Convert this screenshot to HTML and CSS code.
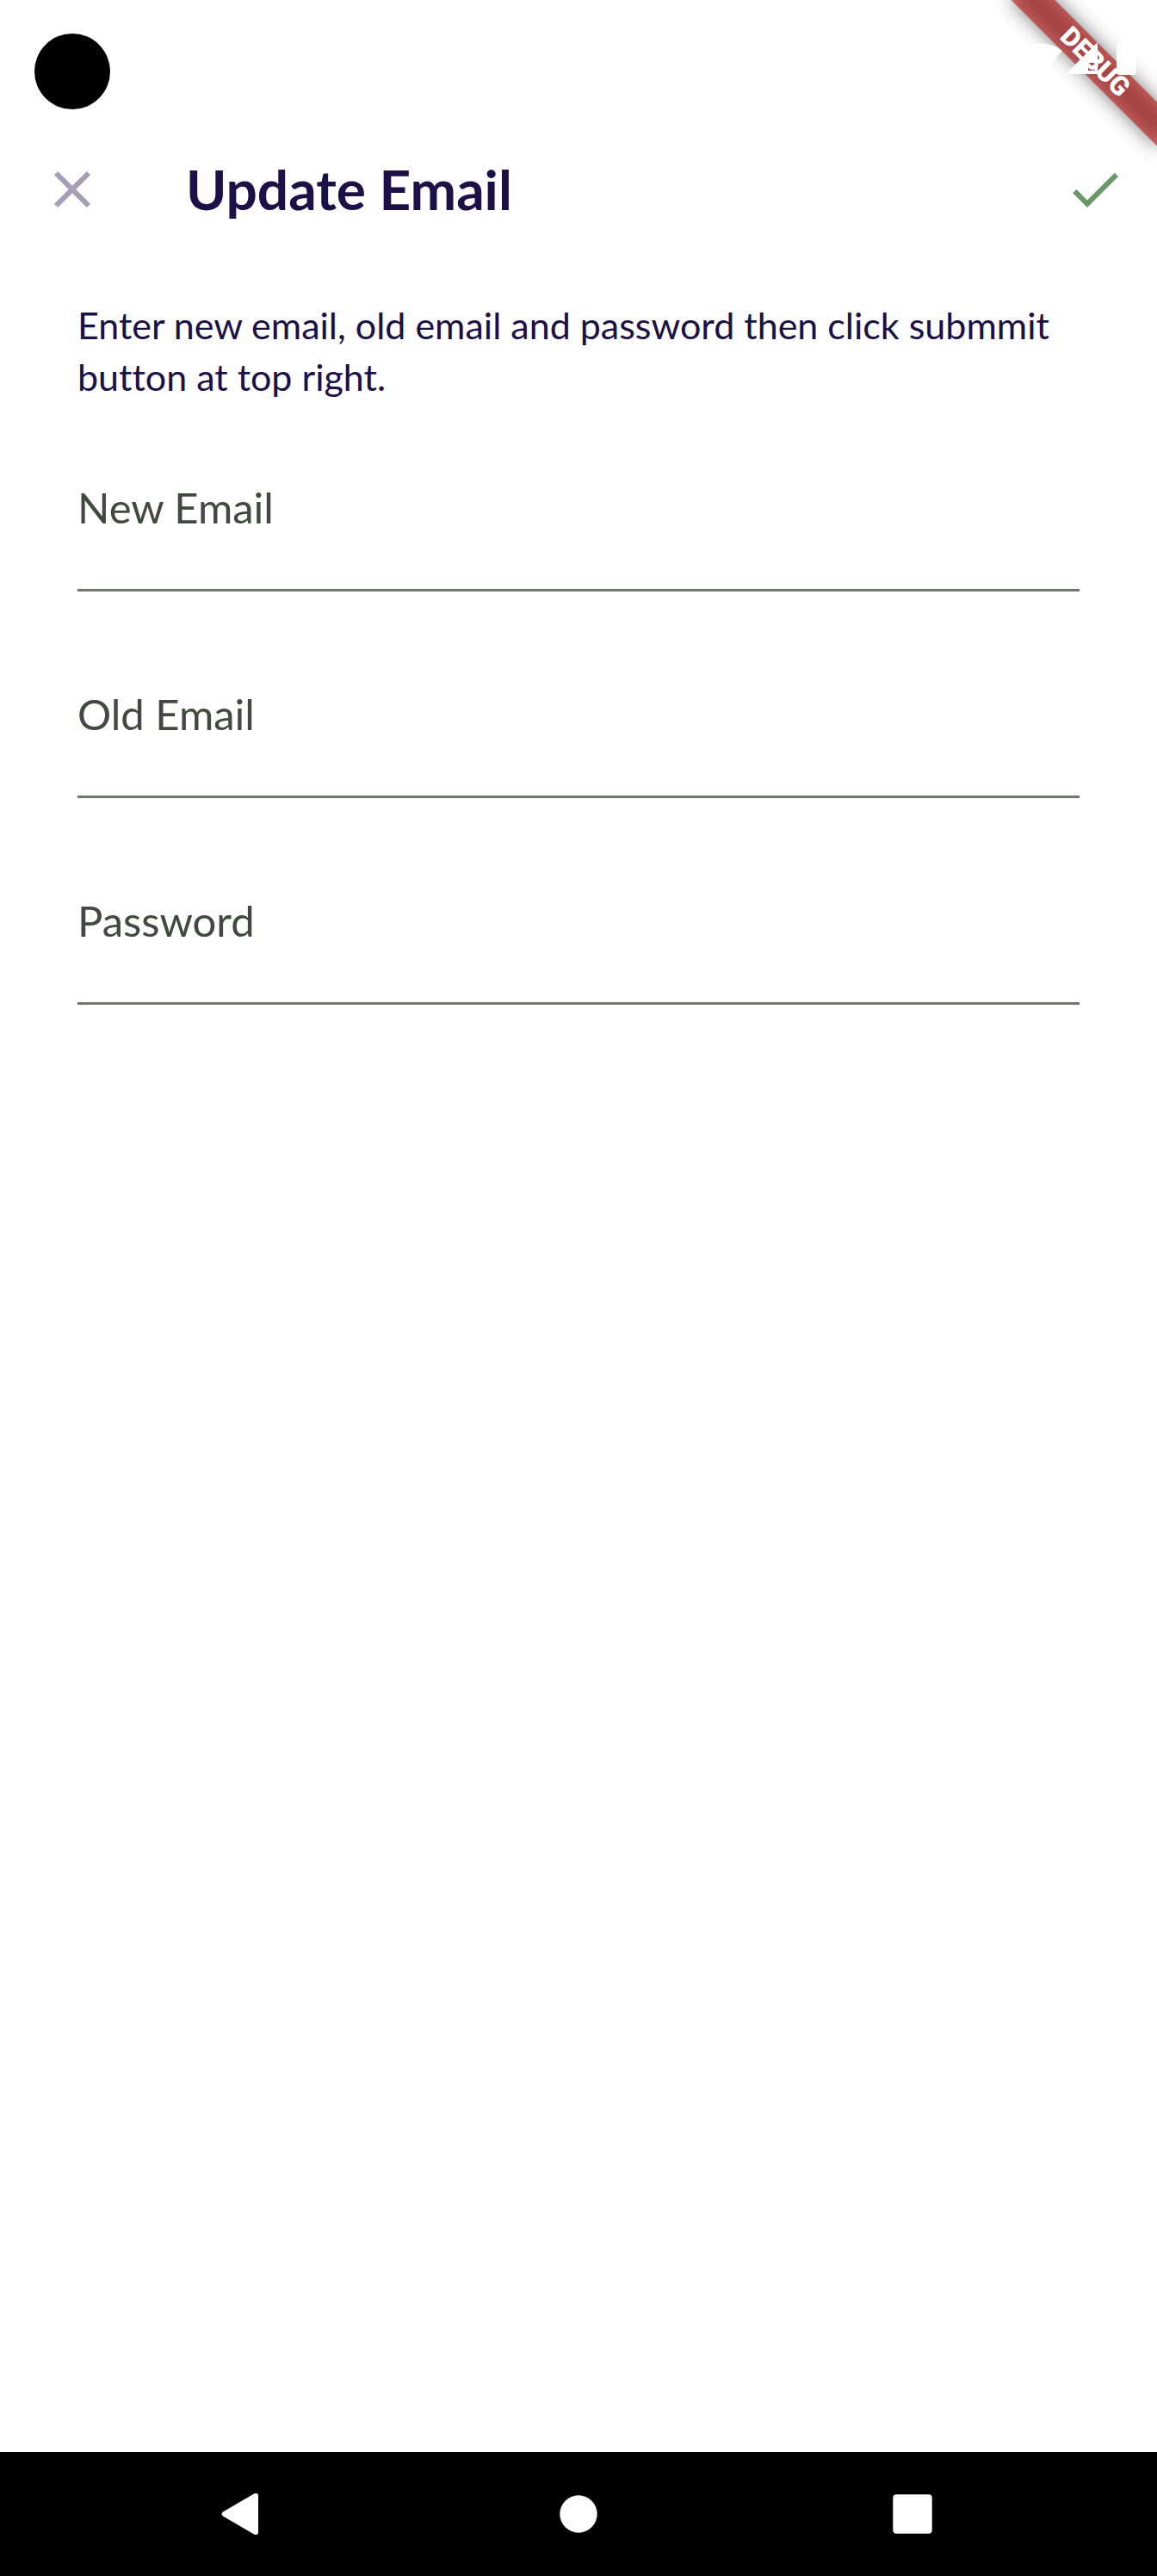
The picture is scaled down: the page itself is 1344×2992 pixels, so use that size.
FILE: index.html
```html
<!DOCTYPE html>
<html lang="en">
<head>
  <meta charset="utf-8">
  <meta name="viewport" content="width=device-width, initial-scale=1">
  <title>Update Email</title>
  <link rel="stylesheet" href="styles.css">
</head>
<body>
  <div class="screen">
    <div class="status-bar">
      <span class="camera"></span>
      <svg class="status-icons" width="136" height="40" viewBox="0 0 136 40" aria-hidden="true">
        <path d="M2 12A38 38 0 0 1 50 12L26 39Z"/>
        <path fill-rule="evenodd" d="M54 39L91 2V39ZM80 26V35H88V26Z"/>
        <path d="M120 0h9v5h4a3 3 0 0 1 3 3v29a3 3 0 0 1-3 3h-17a3 3 0 0 1-3-3V8a3 3 0 0 1 3-3h4z"/>
      </svg>
    </div>

    <form class="form">
      <header class="app-bar">
        <button class="icon-button close" type="button" aria-label="Close">
          <svg class="icon" viewBox="0 0 24 24" aria-hidden="true"><path d="M19 6.41L17.59 5 12 10.59 6.41 5 5 6.41 10.59 12 5 17.59 6.41 19 12 13.41 17.59 19 19 17.59 13.41 12z"/></svg>
        </button>
        <h1 class="title">Update Email</h1>
        <button class="icon-button submit" type="submit" aria-label="Submit">
          <svg class="icon" viewBox="0 0 24 24" aria-hidden="true"><path d="M9 16.17L4.83 12l-1.42 1.41L9 19 21 7l-1.41-1.41z"/></svg>
        </button>
      </header>

      <main class="content">
        <p class="intro">Enter new email, old email and password then click submmit button at top right.</p>
        <div class="fields">
          <div class="field">
            <label class="field-label" for="new-email">New Email</label>
            <input class="field-input" id="new-email" type="email">
          </div>
          <div class="field">
            <label class="field-label" for="old-email">Old Email</label>
            <input class="field-input" id="old-email" type="email">
          </div>
          <div class="field">
            <label class="field-label" for="password">Password</label>
            <input class="field-input" id="password" type="password">
          </div>
        </div>
      </main>
    </form>

    <nav class="nav-bar" aria-label="System">
      <button class="nav-button" type="button" aria-label="Back">
        <svg width="60" height="48" viewBox="-1 0 60 48" aria-hidden="true"><path d="M4 21.500L40 .5Q45 -1.500 45 3V45Q45 49.500 40 47.500L4 26.500Q1 24 4 21.500Z"/></svg>
      </button>
      <button class="nav-button" type="button" aria-label="Home">
        <svg width="48" height="48" viewBox="0 0 48 48" aria-hidden="true"><circle cx="24" cy="24" r="21.700"/></svg>
      </button>
      <button class="nav-button" type="button" aria-label="Recent apps">
        <svg width="48" height="48" viewBox="0 0 48 48" aria-hidden="true"><rect x="1.300" y="1.300" width="45.400" height="45.400" rx="4"/></svg>
      </button>
    </nav>

    <div class="debug-corner"><span class="debug-ribbon">DEBUG</span></div>
  </div>
</body>
</html>
```
FILE: styles.css
```css
*,
*::before,
*::after {
  box-sizing: border-box;
}

body {
  margin: 0;
  background: #fefefe;
  color: #1c1147;
  font-family: Lato, "Noto Sans", sans-serif;
  font-variant-ligatures: none;
}

button {
  padding: 0;
  border: 0;
  background: none;
}

svg {
  display: block;
  fill: currentColor;
}

.screen {
  position: relative;
  display: flex;
  flex-direction: column;
  min-height: 100vh;
}

/* Status bar */
.status-bar {
  display: flex;
  align-items: flex-start;
  justify-content: space-between;
  height: 136px;
  padding: 39px 24px 0 40px;
}

.camera {
  width: 88px;
  height: 88px;
  border-radius: 50%;
  background: #000;
}

.status-icons {
  position: relative;
  z-index: 1;
  margin-top: 8px;
  color: #fff;
}

/* App bar */
.form {
  flex: 1;
}

.app-bar {
  display: flex;
  align-items: center;
  height: 168px;
}

.icon-button {
  display: flex;
  align-items: center;
  justify-content: center;
  height: 144px;
}

.icon {
  width: 72px;
  height: 72px;
}

.close {
  width: 168px;
  color: #a49fb6;
}

.submit {
  width: 144px;
  color: #669869;
}

.title {
  flex: 1;
  margin: 0;
  padding-left: 48px;
  font-size: 64px;
  font-weight: 700;
  line-height: 80px;
}

/* Form */
.content {
  padding: 44px 90px;
}

.intro {
  margin: 0 0 91px;
  font-size: 43px;
  line-height: 60px;
}

.fields {
  display: grid;
  gap: 112px;
}

.field {
  display: grid;
}

.field-label,
.field-input {
  grid-area: 1 / 1;
  font-size: 49px;
}

.field-label {
  align-self: start;
  line-height: 60px;
  color: #424940;
  pointer-events: none;
}

.field-input {
  width: 100%;
  height: 128px;
  padding: 0;
  border: 0;
  border-bottom: 3px solid #72796f;
  border-radius: 0;
  background: transparent;
  color: inherit;
  font-family: inherit;
  outline: 0;
}

/* System navigation */
.nav-bar {
  display: flex;
  justify-content: center;
  gap: 244px;
  height: 144px;
  background: #000;
  color: #fff;
}

.nav-button {
  display: flex;
  align-items: center;
  justify-content: center;
  width: 144px;
  color: inherit;
}

/* Debug ribbon across the top right corner */
.debug-corner {
  position: absolute;
  top: 0;
  right: 0;
  width: 240px;
  height: 240px;
  overflow: hidden;
  pointer-events: none;
}

.debug-ribbon {
  position: absolute;
  top: 54px;
  right: -48px;
  width: 240px;
  height: 36px;
  color: #fff;
  font-family: Roboto, sans-serif;
  font-size: 31px;
  font-weight: 900;
  line-height: 36px;
  text-align: center;
  transform: rotate(45deg);
}

.debug-ribbon::before,
.debug-ribbon::after {
  content: "";
  position: absolute;
  inset: 0;
  z-index: -1;
}

.debug-ribbon::before {
  background: rgba(0, 0, 0, 0.5);
  filter: blur(11px);
}

.debug-ribbon::after {
  background: rgba(183, 28, 28, 0.63);
}
```
